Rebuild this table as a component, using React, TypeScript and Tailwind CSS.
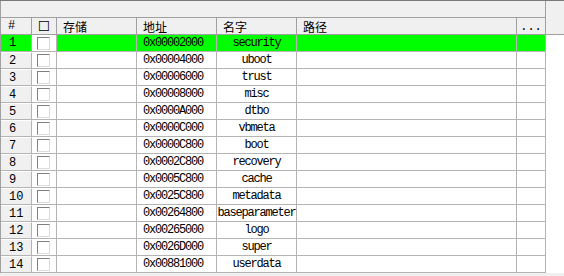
import React from 'react';

interface Row {
  addr: string;
  name: string;
}

const rows: Row[] = [
  { addr: '0x00002000', name: 'security' },
  { addr: '0x00004000', name: 'uboot' },
  { addr: '0x00006000', name: 'trust' },
  { addr: '0x00008000', name: 'misc' },
  { addr: '0x0000A000', name: 'dtbo' },
  { addr: '0x0000C000', name: 'vbmeta' },
  { addr: '0x0000C800', name: 'boot' },
  { addr: '0x0002C800', name: 'recovery' },
  { addr: '0x0005C800', name: 'cache' },
  { addr: '0x0025C800', name: 'metadata' },
  { addr: '0x00264800', name: 'baseparameter' },
  { addr: '0x00265000', name: 'logo' },
  { addr: '0x0026D000', name: 'super' },
  { addr: '0x00881000', name: 'userdata' },
];

const mono = "font-['Liberation_Mono',monospace] text-[12px] tracking-[-1.2px] text-black";
const cjk = "font-['Noto_Sans_CJK_SC','Liberation_Sans',sans-serif] text-[12px] text-black";

const Checkbox: React.FC = () => (
  <div className="w-[13px] h-[13px] bg-white border-t border-l border-t-[#808080] border-l-[#808080] border-b border-r border-b-[#dcdcdc] border-r-[#dcdcdc]" />
);

const App: React.FC = () => {
  return (
    <div className="w-[564px] h-[276px] overflow-hidden bg-[#f0f0f0] border-t border-t-[#7a7a7a]">
      {/* column group bar */}
      <div className="flex h-[17px]">
        <div className="w-[546px] border-l border-l-[#a0a0a0] border-r border-r-[#a0a0a0] border-b border-b-[#a0a0a0] bg-[#f0f0f0]" />
      </div>

      {/* header row */}
      <div className="flex h-[17px] border-b border-b-[#a0a0a0] border-l border-l-[#a0a0a0]">
        <div className={`w-[31px] shrink-0 border-r border-r-[#a0a0a0] pl-[7px] leading-[17px] ${mono} tracking-normal`}>#</div>
        <div className="w-[25px] shrink-0 border-r border-r-[#a0a0a0] flex items-center justify-center text-[14px] leading-[16px] font-['DejaVu_Sans',sans-serif] text-black">☐</div>
        <div className={`w-[80px] shrink-0 border-r border-r-[#a0a0a0] pl-[6px] leading-[17px] ${cjk}`}>存储</div>
        <div className={`w-[80px] shrink-0 border-r border-r-[#a0a0a0] pl-[6px] leading-[17px] ${cjk}`}>地址</div>
        <div className={`w-[80px] shrink-0 border-r border-r-[#a0a0a0] pl-[6px] leading-[17px] ${cjk}`}>名字</div>
        <div className={`w-[220px] shrink-0 border-r border-r-[#a0a0a0] pl-[6px] leading-[17px] ${cjk}`}>路径</div>
        <div className={`w-[29px] shrink-0 border-r border-r-[#a0a0a0] text-center leading-[19px] ${mono} tracking-normal`}>...</div>
        <div className="flex-1" />
      </div>

      {/* body */}
      <div className="bg-white border-l border-l-[#a0a0a0]">
        {rows.map((r, i) => {
          const sel = i === 0;
          const cell = sel ? 'bg-[#00ff00]' : 'bg-white';
          const line = 'border-r border-r-[#b4b4b4] border-b border-b-[#b4b4b4]';
          return (
            <div key={i} className="flex h-[17px]">
              <div className={`w-[31px] shrink-0 pl-[8px] leading-[17px] ${line} ${mono} tracking-normal ${sel ? 'bg-[#00ff00]' : 'bg-[#f0f0f0] border-t border-t-white'}`}>
                {i + 1}
              </div>
              <div className={`w-[25px] shrink-0 bg-white flex items-start pt-[2px] pl-[5px] ${line}`}>
                <Checkbox />
              </div>
              <div className={`w-[80px] shrink-0 ${line} ${cell}`} />
              <div className={`w-[80px] shrink-0 pl-[6px] leading-[17px] ${line} ${mono} ${cell}`}>{r.addr}</div>
              <div className={`w-[80px] shrink-0 text-center leading-[17px] whitespace-nowrap ${line} ${mono} ${cell}`}>{r.name}</div>
              <div className={`w-[220px] shrink-0 ${line} ${cell}`} />
              <div className={`w-[29px] shrink-0 ${line} ${cell}`} />
              <div className="flex-1 bg-white" />
            </div>
          );
        })}
      </div>
    </div>
  );
};

export default App;
